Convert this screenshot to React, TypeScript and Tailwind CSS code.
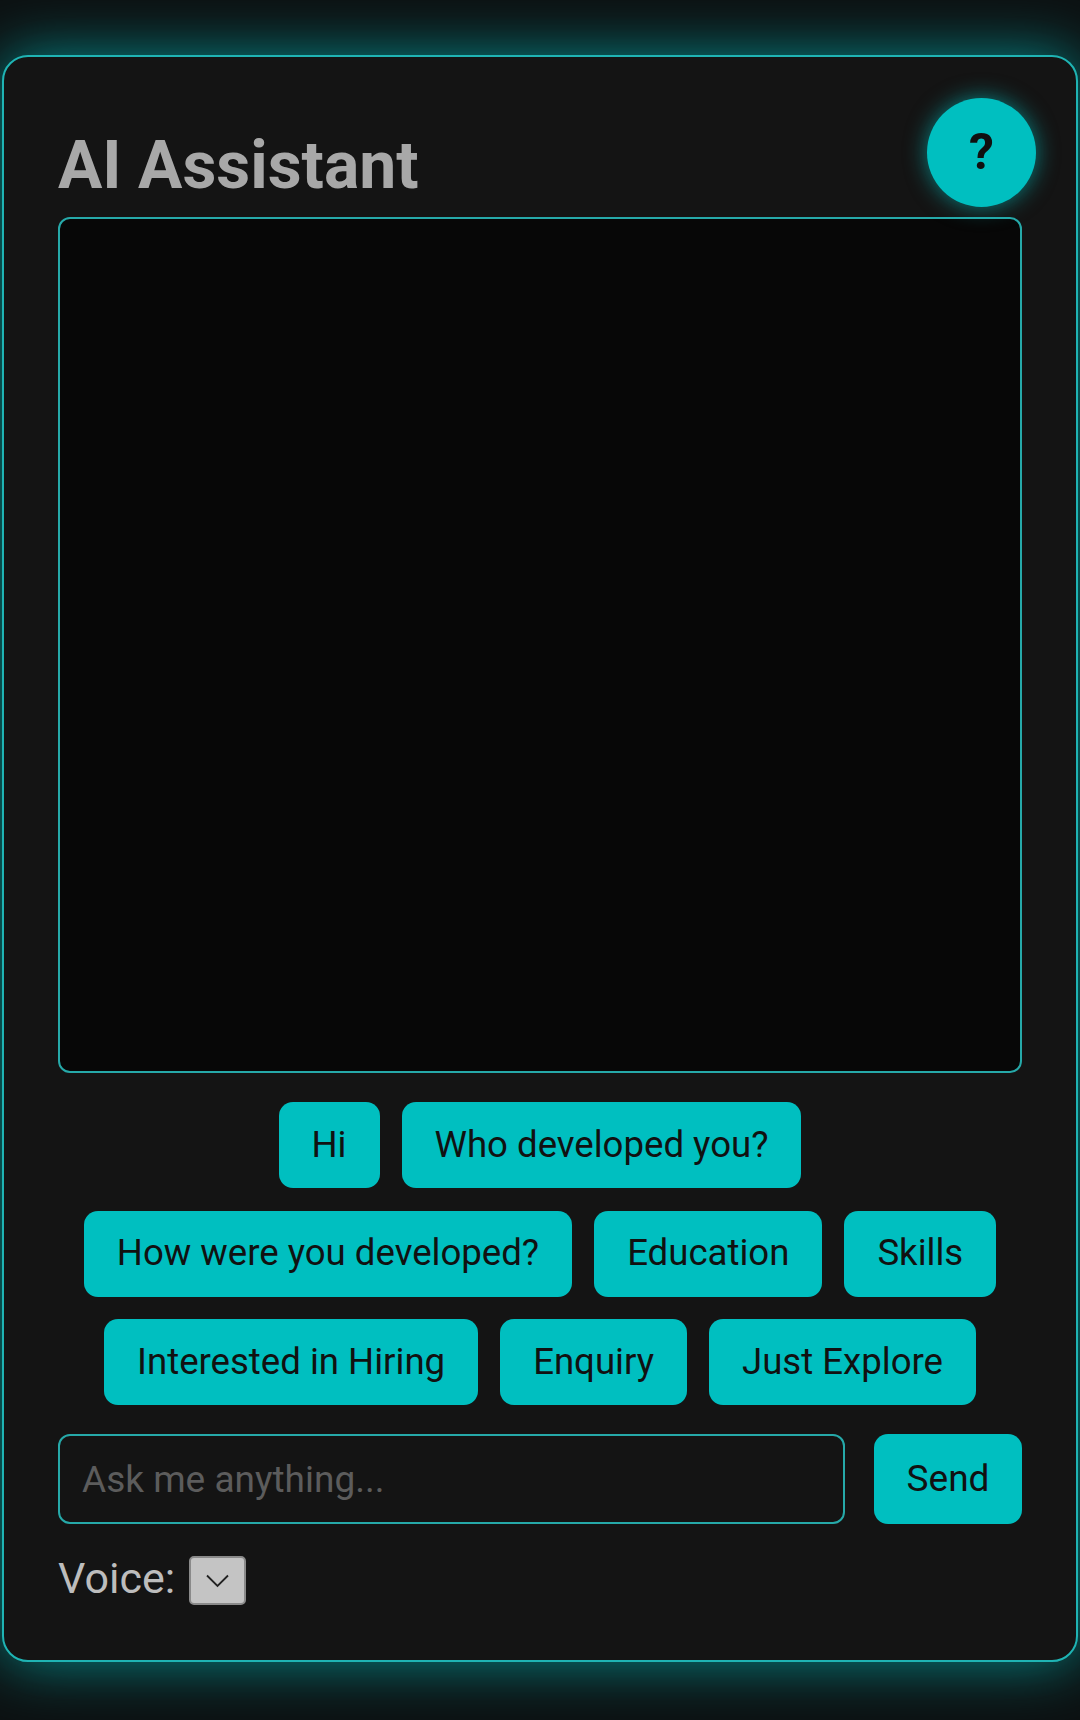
const suggestions = [
  'Hi',
  'Who developed you?',
  'How were you developed?',
  'Education',
  'Skills',
  'Interested in Hiring',
  'Enquiry',
  'Just Explore',
]

export default function App() {
  return (
    <div className="min-h-[1720px] bg-[#0d1112] pt-[55px] font-['Roboto',sans-serif]">
      <div className="relative mx-[2px] rounded-[26px] border-2 border-[#1fb4b4] bg-[#141414] px-[54px] pt-[70px] pb-[53px] shadow-[0_0_60px_rgba(0,190,190,0.7)]">
        <button className="absolute top-[41px] right-[40px] flex h-[109px] w-[109px] items-center justify-center rounded-full bg-[#00bfc0] text-[50px] font-bold text-[#101010] shadow-[0_0_22px_rgba(0,200,200,0.6)]">
          ?
        </button>

        <h1 className="mb-[12px] text-[66px] leading-[78px] font-bold text-[#a8a8a8]">
          AI Assistant
        </h1>

        <div className="h-[856px] rounded-[12px] border-2 border-[#26a9a9] bg-[#070707]" />

        <div className="mt-[29px] flex flex-wrap justify-center gap-x-[22px] gap-y-[22.5px]">
          {suggestions.map((s) => (
            <button
              key={s}
              className="h-[86px] rounded-[14px] bg-[#00bfc0] px-[33px] text-[36.6px] text-[#111]"
            >
              {s}
            </button>
          ))}
        </div>

        <div className="mt-[29px] flex gap-[29px]">
          <input
            placeholder="Ask me anything..."
            className="h-[90px] flex-1 rounded-[12px] border-2 border-[#26a9a9] bg-transparent px-[22px] text-[37px] text-[#ddd] outline-none placeholder:text-[#5c5c5c]"
          />
          <button className="h-[90px] w-[148px] rounded-[14px] bg-[#00bfc0] text-[37px] text-[#111]">
            Send
          </button>
        </div>

        <div className="mt-[30px] flex items-center gap-[14px]">
          <span className="mb-[4px] text-[43px] leading-[49px] text-[#bdbdbd]">Voice:</span>
          <button className="flex h-[49px] w-[57px] items-center justify-center rounded-[5px] border-2 border-[#8a8a8a] bg-[#c4c4c4]">
            <svg width="23" height="14" viewBox="0 0 23 14" fill="none">
              <path d="M1 1.5 L11.5 12 L22 1.5" stroke="#222" strokeWidth="1.8" />
            </svg>
          </button>
        </div>
      </div>
    </div>
  )
}
